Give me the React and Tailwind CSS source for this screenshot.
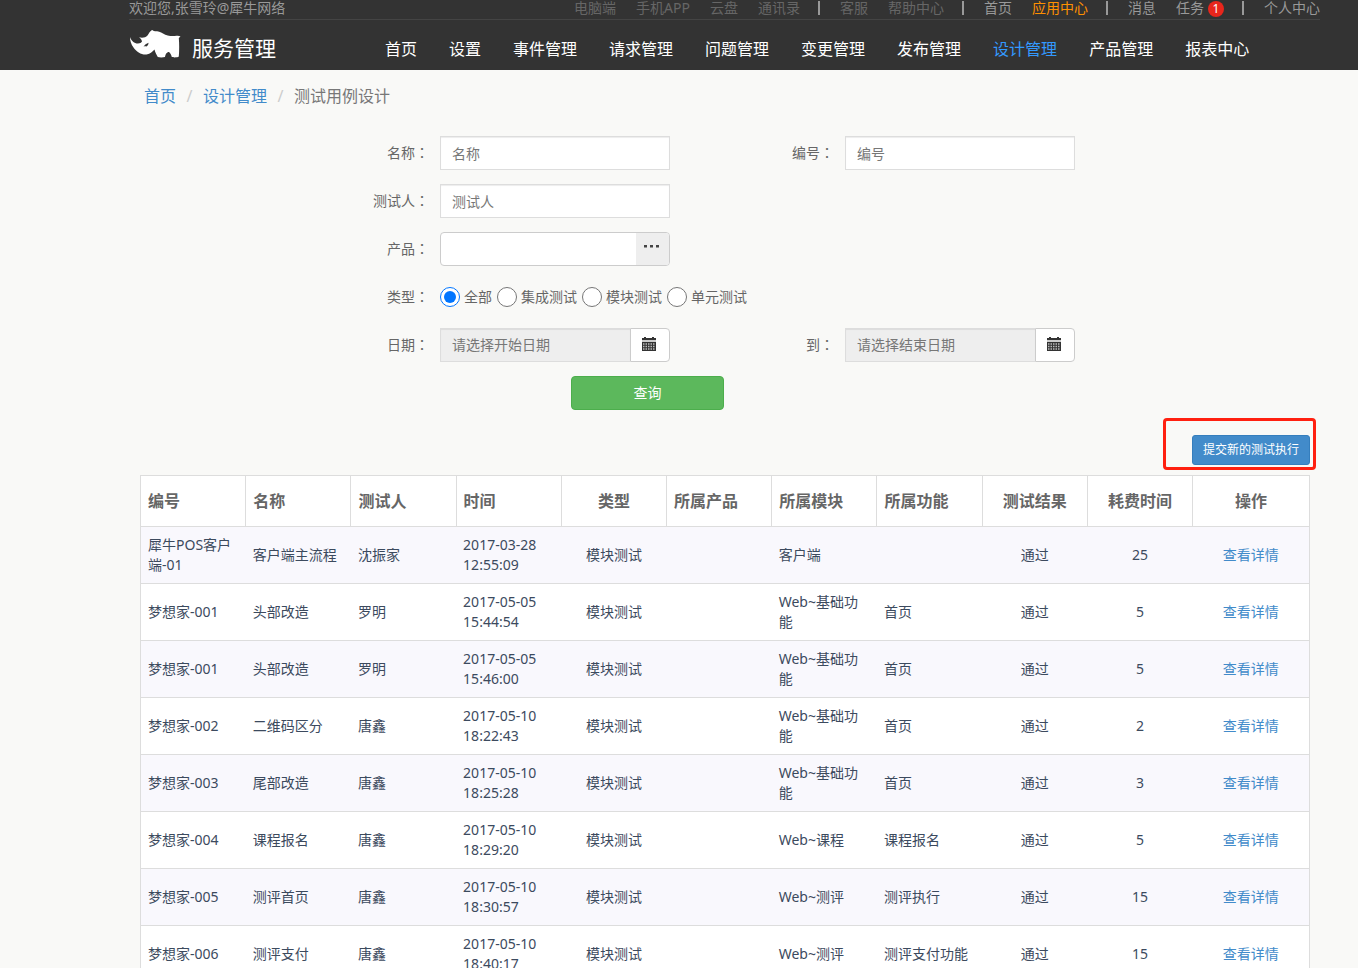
const TOP_LINKS = [
  { name: "电脑端", tone: "dim" },
  { name: "手机APP", tone: "dim" },
  { name: "云盘", tone: "dim" },
  { name: "通讯录", tone: "dim", divider: true },
  { name: "客服", tone: "dim" },
  { name: "帮助中心", tone: "dim", divider: true },
  { name: "首页", tone: "normal" },
  { name: "应用中心", tone: "active", divider: true },
  { name: "消息", tone: "normal" },
  { name: "任务", tone: "normal", badge: 1, divider: true },
  { name: "个人中心", tone: "normal" },
];

const TONES = {
  dim: "text-[#666]",
  normal: "text-[#999]",
  active: "text-[#ff9000]",
};

const NAV = [
  "首页", "设置", "事件管理", "请求管理", "问题管理", "变更管理",
  "发布管理", "设计管理", "产品管理", "报表中心",
];

const TYPES = ["全部", "集成测试", "模块测试", "单元测试"];

const COLUMNS = [
  { key: "code",    name: "编号" },
  { key: "title",   name: "名称" },
  { key: "tester",  name: "测试人" },
  { key: "time",    name: "时间" },
  { key: "type",    name: "类型", center: true },
  { key: "product", name: "所属产品" },
  { key: "module",  name: "所属模块" },
  { key: "feature", name: "所属功能" },
  { key: "result",  name: "测试结果", center: true },
  { key: "cost",    name: "耗费时间", center: true },
];

const ROWS = [
  { code: "犀牛POS客户端-01", title: "客户端主流程", tester: "沈振家", time: "2017-03-28 12:55:09", module: "客户端",       feature: "",             cost: 25 },
  { code: "梦想家-001",       title: "头部改造",     tester: "罗明",   time: "2017-05-05 15:44:54", module: "Web~基础功能", feature: "首页",         cost: 5 },
  { code: "梦想家-001",       title: "头部改造",     tester: "罗明",   time: "2017-05-05 15:46:00", module: "Web~基础功能", feature: "首页",         cost: 5 },
  { code: "梦想家-002",       title: "二维码区分",   tester: "唐鑫",   time: "2017-05-10 18:22:43", module: "Web~基础功能", feature: "首页",         cost: 2 },
  { code: "梦想家-003",       title: "尾部改造",     tester: "唐鑫",   time: "2017-05-10 18:25:28", module: "Web~基础功能", feature: "首页",         cost: 3 },
  { code: "梦想家-004",       title: "课程报名",     tester: "唐鑫",   time: "2017-05-10 18:29:20", module: "Web~课程",     feature: "课程报名",     cost: 5 },
  { code: "梦想家-005",       title: "测评首页",     tester: "唐鑫",   time: "2017-05-10 18:30:57", module: "Web~测评",     feature: "测评执行",     cost: 15 },
  { code: "梦想家-006",       title: "测评支付",     tester: "唐鑫",   time: "2017-05-10 18:40:17", module: "Web~测评",     feature: "测评支付功能", cost: 15 },
].map((r) => ({ ...r, type: "模块测试", product: "", result: "通过" }));

function RhinoLogo() {
  return (
    <svg viewBox="0 0 52 30" className="w-[52px] h-[30px] mt-[10px]" fill="#fff" aria-hidden="true">
      <path d="M1 7 C2.500 11 5 13.500 9 13.500 C11 13.500 12.300 12.800 13 11.500 C12.500 9.500 11.500 8.300 10 7.300 C13 8.200 16.500 7.800 18.500 5.500 C20 3.500 20.500 1.500 23 0 C24 0.300 24.500 1 26 1.200 C29 1.200 31.500 1.800 34 3.500 C38 6 43 6.500 47.500 5.800 C49 5.500 50.500 5.800 51.500 6.500 L49.800 8 C50.300 13 50.300 21 49.800 26.500 C48.500 27.600 44 27.600 42.800 27 C42.300 25 41.500 23.200 40 22 C37.500 22 36.500 24.500 36 27 C34 27.600 30.500 27.600 28.800 27 C27.500 24.800 26.300 22.500 25.500 19.500 C23.500 21.500 21.500 24 17.500 24.500 C12.500 25 7.500 22 4.500 17.500 C2 14 1 10.500 1 7 Z" />
      <path d="M14.500 16.800 C15.500 14.800 17.500 13.500 19.500 12.800 C19.500 14.500 18.800 15.500 17.500 16.600 C16.500 16.200 15.500 16.300 14.500 16.800 Z" fill="#333" />
    </svg>
  );
}

function CalendarIcon() {
  return (
    <svg viewBox="0 0 14 14" className="w-3.5 h-3.5" aria-hidden="true">
      <path d="M2 0h2v1h6V0h2v1h2v2H0V1h2z" fill="#333" />
      <path d="M0 3h14v2H0z" fill="#ccc" />
      <path d="M0 5h14v9H0z" fill="#333" />
      <path d="M1 7h12M1 9.500h12M1 12h12" stroke="#bbb" strokeWidth="1.500" strokeDasharray="1.500 1" />
    </svg>
  );
}

function Field({ id, label, children }) {
  return (
    <div className="flex items-center h-[34px] gap-[11px]">
      <label htmlFor={id} className="w-[100px] pb-0.5 shrink-0 text-right">
        {label}
        <span className="font-['Noto_Sans_CJK_TC',sans-serif]">：</span>
      </label>
      {children}
    </div>
  );
}

function TextField({ id, label }) {
  return (
    <Field id={id} label={label}>
      <input
        id={id}
        type="text"
        placeholder={label}
        className="w-[230px] h-[34px] px-[11px] bg-white border border-[#ddd] shadow-[inset_0_1px_1px_rgba(0,0,0,0.075)] placeholder:text-[#777] outline-none"
      />
    </Field>
  );
}

function DateField({ id, label, placeholder }) {
  return (
    <Field id={id} label={label}>
      <div className="flex w-[230px] h-[34px]">
        <input
          id={id}
          type="text"
          readOnly
          placeholder={placeholder}
          className="flex-1 min-w-0 px-[11px] bg-[#eee] border border-r-0 border-[#ddd] shadow-[inset_0_1px_1px_rgba(0,0,0,0.075)] placeholder:text-[#777] outline-none"
        />
        <button type="button" aria-label={placeholder} className="w-10 pt-2 pl-[11px] self-stretch flex items-start bg-white border border-[#ccc] rounded-r">
          <CalendarIcon />
        </button>
      </div>
    </Field>
  );
}

function Header() {
  return (
    <header className="h-[70px] pl-[129px] pr-[38px] bg-[#333]">
      {/* Account bar */}
      <div className="flex justify-between h-5 leading-4 border-b border-[#444] text-[#999]">
        <span>欢迎您,张雪玲@犀牛网络</span>
        <ul className="flex gap-5">
          {TOP_LINKS.map((l) => (
            <li key={l.name} className="flex gap-[18px]">
              <a href="#" className={`flex gap-1 ${TONES[l.tone]}`}>
                {l.name}
                {l.badge && (
                  <span className="size-4 mt-px rounded-full bg-[#e8261c] text-center text-xs leading-4 text-white">{l.badge}</span>
                )}
              </a>
              {l.divider && <span className="w-0.5 h-3.5 mt-px bg-[#999]" />}
            </li>
          ))}
        </ul>
      </div>

      {/* Main navigation */}
      <div className="flex">
        <a href="#" className="flex gap-[11px] w-64 text-[21px] leading-[56px] text-white">
          <RhinoLogo />
          服务管理
        </a>
        <nav className="flex gap-8 text-base leading-[58px] h-[50px]">
          {NAV.map((name) => (
            <a key={name} href="#" className={name === "设计管理" ? "text-[#3399ff]" : "text-white"}>
              {name}
            </a>
          ))}
        </nav>
      </div>
    </header>
  );
}

function SearchForm() {
  return (
    <form className="flex flex-col gap-3.5 pl-[189px] mt-7" onSubmit={(e) => e.preventDefault()}>
      <div className="flex gap-16">
        <TextField id="name" label="名称" />
        <TextField id="code" label="编号" />
      </div>
      <TextField id="tester" label="测试人" />
      <Field id="product" label="产品">
        <div className="flex w-[230px] h-[34px] border border-[#ccc] rounded overflow-hidden bg-white">
          <input id="product" type="text" className="flex-1 min-w-0 px-[11px] outline-none" />
          <button type="button" aria-label="选择产品" className="flex items-start pl-2 w-[33px] pt-3 bg-[#eee]">
            <svg viewBox="0 0 16 3" className="w-4 h-[3px]" fill="#444" aria-hidden="true">
              <path d="M0 0h3v2.500H0zM6 0h3v2.500H6zM12 0h3v2.500h-3z" />
            </svg>
          </button>
        </div>
      </Field>
      <Field id="type-0" label="类型">
        <div className="flex gap-[5px]">
          {TYPES.map((t, i) => (
            <label key={t} className="flex items-center gap-1">
              <input id={`type-${i}`} type="radio" name="type" defaultChecked={i === 0} className="size-5" />
              {t}
            </label>
          ))}
        </div>
      </Field>
      <div className="flex gap-16">
        <DateField id="start" label="日期" placeholder="请选择开始日期" />
        <DateField id="end" label="到" placeholder="请选择结束日期" />
      </div>
      <button type="submit" className="w-[153px] h-[34px] ml-[242px] rounded bg-[#5cb85c] border border-[#4cae4c] text-white">
        查询
      </button>
    </form>
  );
}

export default function App() {
  return (
    <div className="min-h-screen bg-[#f9f9f7] text-sm leading-5 text-[#666] font-['Noto_Sans','Noto_Sans_CJK_SC',sans-serif]">
      <Header />
      <main className="pl-[140px] pr-12">
        <ol className="flex pt-3.5 pl-1 text-base leading-6">
          <li><a href="#" className="text-[#428bca]">首页</a></li>
          <li className="w-[27px] text-center text-[#ccc]">/</li>
          <li><a href="#" className="text-[#428bca]">设计管理</a></li>
          <li className="w-[27px] text-center text-[#ccc]">/</li>
          <li className="text-[#777]">测试用例设计</li>
        </ol>

        <SearchForm />

        <div className="flex justify-end mt-[25px]">
          <div className="relative">
            <button type="button" className="w-[118px] h-[30px] rounded-[3px] bg-[#428bca] border border-[#357ebd] text-xs text-white">
              提交新的测试执行
            </button>
            <div className="absolute -top-[17px] -left-[29px] -right-1.5 -bottom-[5px] border-3 border-[#ff2010] rounded pointer-events-none" />
          </div>
        </div>

        <table className="table-fixed w-full mt-2.5 border-collapse border border-[#ddd] bg-white">
          <thead>
            <tr className="h-[51px] text-base">
              {COLUMNS.map((c) => (
                <th key={c.key} className={`w-[9%] px-[7px] border border-[#ddd] font-bold ${c.center ? "text-center" : "text-left"}`}>
                  {c.name}
                </th>
              ))}
              <th className="w-[10%] border border-[#ddd] font-bold text-center">操作</th>
            </tr>
          </thead>
          <tbody className="text-[#3c4a5e]">
            {ROWS.map((r) => (
              <tr key={r.time} className="h-[57px] border-t border-[#ddd] odd:bg-[#f9f8fd]">
                {COLUMNS.map((c) => (
                  <td key={c.key} className={`px-[7px] ${c.center ? "text-center" : ""}`}>{r[c.key]}</td>
                ))}
                <td className="text-center">
                  <a href="#" className="text-[#428bca]">查看详情</a>
                </td>
              </tr>
            ))}
          </tbody>
        </table>
      </main>
    </div>
  );
}
